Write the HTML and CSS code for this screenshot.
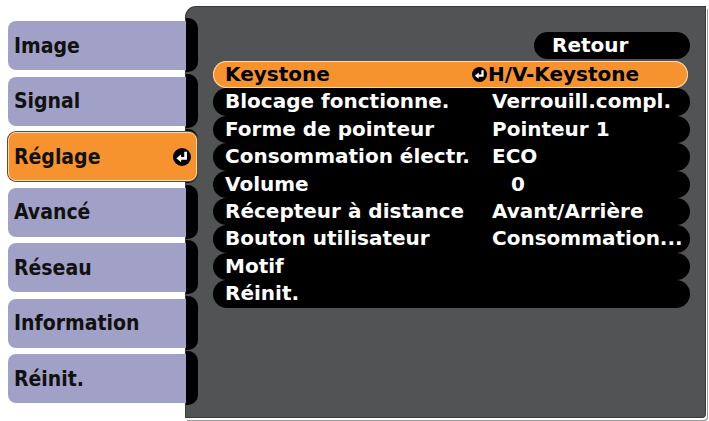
FILE: index.html
```html
<!DOCTYPE html>
<html lang="fr">
<head>
<meta charset="utf-8">
<title>Réglage</title>
<link rel="stylesheet" href="styles.css">
</head>
<body>
<div class="screen">
  <nav class="menu">
    <div class="item">Image</div>
    <div class="item">Signal</div>
    <div class="item active">Réglage
      <svg class="enter" viewBox="0 0 16 16"><circle cx="8" cy="8" r="8" fill="#000"/><path d="M11.2 3.4v5.8H6.5" stroke="#fff" stroke-width="2.4" fill="none"/><polygon points="3,9.2 7.2,5.8 7.2,12.6" fill="#fff"/></svg>
    </div>
    <div class="item">Avancé</div>
    <div class="item">Réseau</div>
    <div class="item">Information</div>
    <div class="item">Réinit.</div>
  </nav>
  <section class="panel">
    <div class="tabs">
      <span class="tab"></span><span class="tab"></span><span class="tab"></span><span class="tab"></span><span class="tab"></span><span class="tab"></span><span class="tab"></span>
    </div>
    <div class="content">
      <div class="back"><span class="back-pill">Retour</span></div>
      <ul class="rows">
        <li class="row current"><span class="label">Keystone</span><span class="value with-icon"><svg class="enter small" viewBox="0 0 16 16"><circle cx="8" cy="8" r="8" fill="#000"/><path d="M11.2 3.4v5.8H6.5" stroke="#fff" stroke-width="2.4" fill="none"/><polygon points="3,9.2 7.2,5.8 7.2,12.6" fill="#fff"/></svg>H/V-Keystone</span></li>
        <li class="row"><span class="label">Blocage fonctionne.</span><span class="value">Verrouill.compl.</span></li>
        <li class="row"><span class="label">Forme de pointeur</span><span class="value">Pointeur 1</span></li>
        <li class="row"><span class="label">Consommation électr.</span><span class="value">ECO</span></li>
        <li class="row"><span class="label">Volume</span><span class="value num">0</span></li>
        <li class="row"><span class="label">Récepteur à distance</span><span class="value">Avant/Arrière</span></li>
        <li class="row"><span class="label">Bouton utilisateur</span><span class="value">Consommation...</span></li>
        <li class="row"><span class="label">Motif</span><span class="value"></span></li>
        <li class="row"><span class="label">Réinit.</span><span class="value"></span></li>
      </ul>
    </div>
  </section>
</div>
</body>
</html>
```
FILE: styles.css
```css
html, body {
  margin: 0;
  padding: 0;
  background: #ffffff;
}

.screen {
  width: 709px;
  height: 421px;
  display: grid;
  grid-template-columns: 8px 178px 12px 507px 4px;
  grid-template-rows: 7px 410px 4px;
}

.menu {
  grid-column: 2 / 4;
  grid-row: 2;
  z-index: 2;
  padding-top: 14px;
  display: flex;
  flex-direction: column;
  gap: 6.5px;
}

.item {
  width: 178px;
  height: 49px;
  box-sizing: border-box;
  background: #a1a0c6;
  border-radius: 8px 0 0 8px;
  display: flex;
  align-items: center;
  padding-left: 6px;
  font-family: "DejaVu Sans Condensed", "DejaVu Sans", sans-serif;
  font-stretch: condensed;
  font-weight: bold;
  font-size: 21px;
  color: #111;
}

.item.active {
  width: 189px;
  background: #f7932f;
  border: 1px solid #f7d9b0;
  border-radius: 8px;
  padding-left: 5px;
  justify-content: space-between;
  padding-right: 5px;
  box-shadow: 0 0 0 1px #6a4a2a;
}

.enter {
  display: block;
  flex: none;
  width: 18px;
  height: 18px;
}

.enter.small {
  width: 15px;
  height: 15px;
}

.panel {
  grid-column: 3 / 5;
  grid-row: 2;
  background: #525355;
  border-radius: 10px 0 3px 0;
  box-shadow: 0 0 0 1px #3a3a3c, 1px 2px 0 1px #ffffff, 2px 3px 0 1px #9a9a9a;
  display: flex;
}

.tabs {
  width: 12px;
  flex: none;
  padding-top: 11px;
  display: flex;
  flex-direction: column;
  gap: 1.5px;
}

.tab {
  display: block;
  height: 54px;
  background: #000;
  border-radius: 0 10px 10px 0;
}

.content {
  flex: 1;
  padding: 25px 15px 0 15px;
  font-family: "DejaVu Sans", sans-serif;
  font-weight: bold;
  font-size: 20px;
  color: #fff;
}

.back {
  display: flex;
  justify-content: flex-end;
  margin-bottom: 2px;
}

.back-pill {
  width: 156px;
  height: 27px;
  line-height: 27px;
  box-sizing: border-box;
  padding-left: 18px;
  background: #000;
  border-radius: 14px;
}

.rows {
  list-style: none;
  margin: 0;
  padding: 0;
}

.row {
  height: 27.4px;
  line-height: 27.4px;
  background: #000;
  border-radius: 14px;
  display: flex;
  white-space: nowrap;
}

.row.current {
  background: #f7932f;
  color: #000;
  box-shadow: inset 0 0 0 1px #f8dcb4;
  margin-right: 2px;
}

.label {
  width: 267px;
  padding-left: 12px;
  flex: none;
}

.value {
  display: flex;
  align-items: center;
}

.value.with-icon {
  margin-left: -20px;
  gap: 1px;
}

.value.num {
  padding-left: 19px;
}
```
